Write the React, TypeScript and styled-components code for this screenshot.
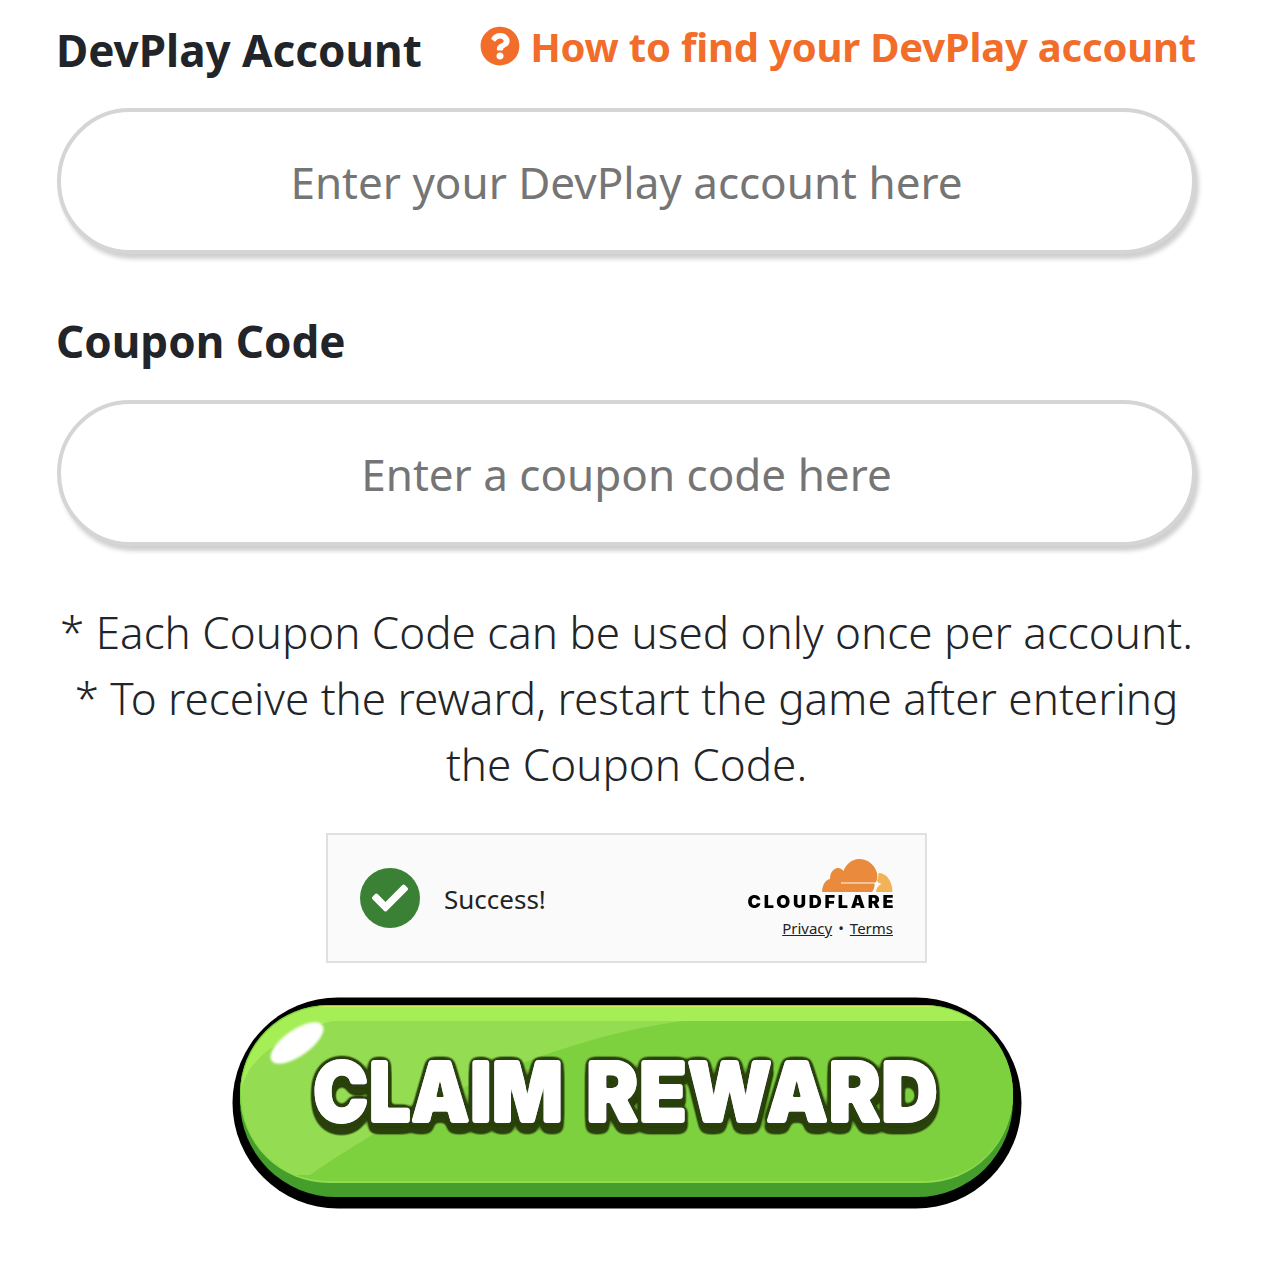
import React from 'react';
import styled, { createGlobalStyle } from 'styled-components';
import { FaQuestionCircle, FaCheck } from 'react-icons/fa';

const GlobalStyle = createGlobalStyle`
  * { box-sizing: border-box; }
  html, body { margin: 0; padding: 0; background: #fff; }
  body { font-family: 'Noto Sans', 'Open Sans', sans-serif; color: #212529; }
`;

export default function App() {
  return (
    <Page>
      <GlobalStyle />
      <LabelRow>
        <Label>DevPlay Account</Label>
        <HelpLink href="#help">
          <FaQuestionCircle />
          How to find your DevPlay account
        </HelpLink>
      </LabelRow>
      <Field placeholder="Enter your DevPlay account here" />
      <CouponLabel>Coupon Code</CouponLabel>
      <Field placeholder="Enter a coupon code here" />
      <Notes>
        * Each Coupon Code can be used only once per account.
        <br />* To receive the reward, restart the game after entering the Coupon Code.
      </Notes>
      <Widget>
        <Status>
          <CheckBadge>
            <FaCheck />
          </CheckBadge>
          <StatusText>Success!</StatusText>
        </Status>
        <Brand>
          <CloudLogo />
          <Wordmark>CLOUDFLARE</Wordmark>
          <Legal>
            <a href="#privacy">Privacy</a>
            <span>•</span>
            <a href="#terms">Terms</a>
          </Legal>
        </Brand>
      </Widget>
      <ClaimButton type="button">
        <ClaimArt />
      </ClaimButton>
    </Page>
  );
}

function CloudLogo() {
  return (
    <svg width="71" height="35" viewBox="0 0 71 35" aria-hidden="true">
      <path
        fill="#e98a3c"
        d="M0 34 C0.5 27 3 22 8 21 C8 14 12 10 16 10 C18 10 20 11 21.5 13 C24 6 30 1 37 1 C47 1 53 8 55 15 C56 20 54.5 23 53.5 24.6 L19 24.6 L19 25.6 L52.5 25.6 C53 28 52 32 50 34 Z"
      />
      <path
        fill="#f2b256"
        d="M56.5 15 C64.5 15 70.5 23 70.5 34 L54 34 C54.5 30 56 27.5 60 26 C56.5 25 55.5 24 55 22.5 C56 20 56.5 17.5 56.5 15 Z"
      />
    </svg>
  );
}

function ClaimArt() {
  return (
    <svg width="790" height="212" viewBox="0 0 790 212" role="img">
      <defs>
        <clipPath id="face">
          <rect x="9" y="9" width="772" height="176" rx="88" />
        </clipPath>
        <filter id="shine" x="-20%" y="-20%" width="140%" height="140%">
          <feGaussianBlur stdDeviation="1" />
        </filter>
        <filter id="lettering" filterUnits="userSpaceOnUse" x="0" y="0" width="790" height="212">
          <feGaussianBlur in="SourceAlpha" stdDeviation="0.8" result="softThin" />
          <feComponentTransfer in="softThin" result="thin">
            <feFuncA type="linear" slope="5" intercept="-0.6" />
          </feComponentTransfer>
          <feFlood floodColor="#fff" />
          <feComposite in2="thin" operator="in" result="white" />
          <feGaussianBlur in="SourceAlpha" stdDeviation="3.6" result="softWide" />
          <feComponentTransfer in="softWide" result="wide">
            <feFuncA type="linear" slope="9" intercept="-0.5" />
          </feComponentTransfer>
          <feFlood floodColor="#2a410f" />
          <feComposite in2="wide" operator="in" result="dark" />
          <feOffset in="dark" dy="8" result="drop" />
          <feMerge>
            <feMergeNode in="drop" />
            <feMergeNode in="dark" />
            <feMergeNode in="white" />
          </feMerge>
        </filter>
      </defs>
      <rect x="0.5" y="0.5" width="789" height="211" rx="105.5" fill="#000" />
      <rect x="8" y="8" width="773" height="192" rx="96" fill="#459e2c" />
      <rect x="8" y="8" width="773" height="178" rx="89" fill="#8fdc50" />
      <rect x="8" y="8" width="773" height="176" rx="88" fill="#7dd13e" />
      <g clipPath="url(#face)">
        <rect x="0" y="8" width="790" height="16" fill="#a6ee55" />
        <rect x="0" y="8" width="790" height="2" fill="#d0f058" />
        <path d="M0 24 H450 C330 40 190 100 78 178 L0 178 Z" fill="#94dc52" />
        <path d="M0 24 H100 C40 40 9 70 9 100 L0 100 Z" fill="#a6ee55" />
      </g>
      <ellipse cx="65" cy="46" rx="31" ry="13" fill="#fff" filter="url(#shine)" transform="rotate(-35 65 46)" />
      <ClaimLabel y="125" filter="url(#lettering)">
        <tspan x="81" textLength="250" lengthAdjust="spacingAndGlyphs">
          CLAIM
        </tspan>{' '}
        <tspan x="354" textLength="352" lengthAdjust="spacingAndGlyphs">
          REWARD
        </tspan>
      </ClaimLabel>
    </svg>
  );
}

const Page = styled.main`
  width: 1286px;
  min-height: 1264px;
  padding: 22px 90px 0 57px;
`;

const LabelRow = styled.div`
  display: flex;
  align-items: center;
  justify-content: space-between;
  height: 56px;
  margin-bottom: 30px;
`;

const Label = styled.label`
  display: block;
  font-size: 44px;
  line-height: 56px;
  font-weight: 700;
  margin-left: -1px;
`;

const CouponLabel = styled(Label)`
  margin: 59px 0 31px -1px;
`;

const HelpLink = styled.a`
  display: flex;
  align-items: center;
  gap: 10px;
  margin-top: -8px;
  font-size: 40px;
  font-weight: 700;
  letter-spacing: -0.2px;
  color: #f26c2a;
  text-decoration: none;

  svg {
    width: 40px;
    height: 40px;
  }
`;

const Field = styled.input`
  display: block;
  width: 100%;
  height: 146px;
  padding-top: 2px;
  border: 4px solid #d5d5d5;
  border-radius: 73px;
  background: #fff;
  box-shadow: 3px 5px 4px #d0d0d0;
  font: 400 44px 'Noto Sans', sans-serif;
  text-align: center;
  outline: none;

  &::placeholder {
    color: #757575;
    opacity: 1;
  }
`;

const Notes = styled.p`
  margin: 53px 0 36px;
  font-size: 44px;
  line-height: 66px;
  font-weight: 300;
  text-align: center;
`;

const Widget = styled.div`
  display: flex;
  align-items: center;
  justify-content: space-between;
  width: 601px;
  height: 130px;
  margin: 0 auto 34px;
  padding: 0 32px;
  border: 2px solid #e0e0e0;
  background: #fafafa;
`;

const Status = styled.div`
  display: flex;
  align-items: center;
  gap: 24px;
`;

const CheckBadge = styled.div`
  display: flex;
  align-items: center;
  justify-content: center;
  width: 60px;
  height: 60px;
  border-radius: 50%;
  background: #3a8035;
  color: #fff;

  svg {
    width: 36px;
    height: 36px;
  }
`;

const StatusText = styled.span`
  font-size: 26px;
  padding-top: 1px;
  color: #232323;
`;

const Brand = styled.div`
  display: flex;
  flex-direction: column;
  align-items: flex-end;
`;

const Wordmark = styled.div`
  margin: -1px -3px 0 0;
  font: 900 17px/20px Inter, sans-serif;
  letter-spacing: 2.6px;
  transform: scaleX(1.06);
  transform-origin: right center;
  color: #000;
`;

const Legal = styled.div`
  display: flex;
  gap: 6px;
  margin-top: 6px;
  font-size: 15px;
  line-height: 20px;
  color: #232323;

  a {
    color: #232323;
    text-decoration: underline;
  }
`;

const ClaimButton = styled.button`
  display: block;
  width: 790px;
  height: 212px;
  margin: 0 auto;
  padding: 0;
  border: 0;
  background: none;
  cursor: pointer;

  svg {
    display: block;
  }
`;

const ClaimLabel = styled.text`
  font: 900 84px Inter, sans-serif;
  fill: #fff;
`;
